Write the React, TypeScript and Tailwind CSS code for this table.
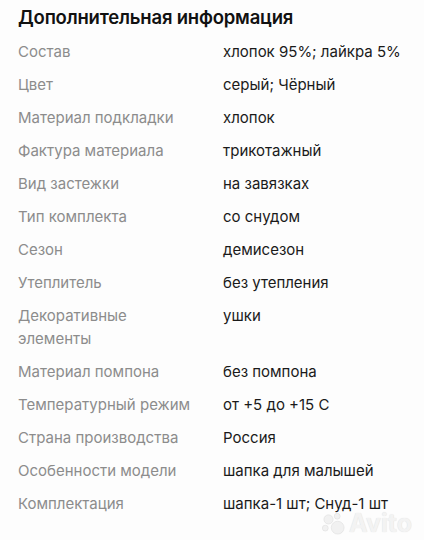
const rows: [string, string][] = [
  ["Состав", "хлопок 95%; лайкра 5%"],
  ["Цвет", "серый; Чёрный"],
  ["Материал подкладки", "хлопок"],
  ["Фактура материала", "трикотажный"],
  ["Вид застежки", "на завязках"],
  ["Тип комплекта", "со снудом"],
  ["Сезон", "демисезон"],
  ["Утеплитель", "без утепления"],
  ["Декоративные элементы", "ушки"],
  ["Материал помпона", "без помпона"],
  ["Температурный режим", "от +5 до +15 С"],
  ["Страна производства", "Россия"],
  ["Особенности модели", "шапка для малышей"],
  ["Комплектация", "шапка-1 шт; Снуд-1 шт"],
];

const AvitoMark = () => (
  <div className="absolute bottom-[4px] right-[12px] flex items-center gap-[3px] text-[25px] font-bold leading-none text-[#f3f3f3] [text-shadow:0_0_1px_#d8d8d8]">
    <svg width="24" height="22" viewBox="0 0 26 24" fill="#f1f1f1" stroke="#dcdcdc" strokeWidth="0.6">
      <circle cx="7" cy="7" r="5" />
      <circle cx="16.5" cy="3.5" r="3.2" />
      <circle cx="3.5" cy="16.5" r="3.2" />
      <circle cx="17" cy="16" r="7" />
    </svg>
    <span>Avito</span>
  </div>
);

const App = () => {
  return (
    <div className="relative h-[540px] w-[424px] overflow-hidden bg-[#fdfdfd] font-['Inter',sans-serif]">
      <div className="px-[18px] pt-[5px]">
        <h2 className="text-[18.5px] font-semibold leading-[24px] tracking-[-0.2px] text-[#111]">
          Дополнительная информация
        </h2>
        <div className="mt-[11px] flex flex-col gap-[10px] text-[15px] leading-[23px]">
          {rows.map(([label, value]) => (
            <div key={label} className="grid grid-cols-[180px_1fr] gap-[25px]">
              <div className="text-[#8c8c8c]">{label}</div>
              <div className="text-[#1a1a1a]">{value}</div>
            </div>
          ))}
        </div>
      </div>
      <AvitoMark />
    </div>
  );
};

export default App;
